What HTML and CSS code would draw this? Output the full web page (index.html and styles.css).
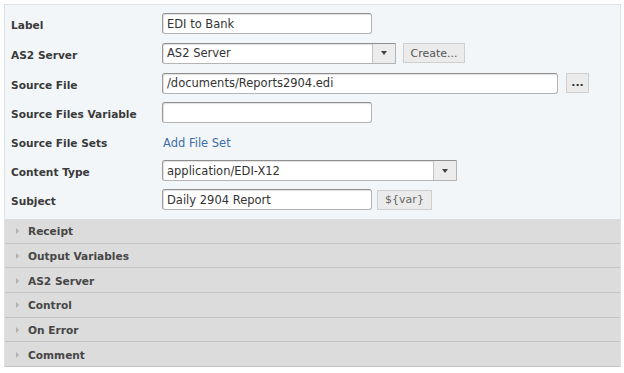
FILE: index.html
```html
<!DOCTYPE html>
<html>
<head>
<meta charset="utf-8">
<link rel="stylesheet" href="styles.css">
</head>
<body>
<div class="panel">
  <div class="form">
    <div class="row">
      <div class="label">Label</div>
      <div class="input w209">EDI to Bank</div>
    </div>
    <div class="row tall">
      <div class="label">AS2 Server</div>
      <div class="select w233"><div class="sel-text">AS2 Server</div><div class="sel-btn"><span class="tri"></span></div></div>
      <div class="btn create">Create...</div>
    </div>
    <div class="row tall">
      <div class="label">Source File</div>
      <div class="input w395">/documents/Reports2904.edi</div>
      <div class="btn dots">...</div>
    </div>
    <div class="row">
      <div class="label">Source Files Variable</div>
      <div class="input w209"></div>
    </div>
    <div class="row">
      <div class="label">Source File Sets</div>
      <div class="link">Add File Set</div>
    </div>
    <div class="row">
      <div class="label">Content Type</div>
      <div class="select w294"><div class="sel-text">application/EDI-X12</div><div class="sel-btn"><span class="tri"></span></div></div>
    </div>
    <div class="row">
      <div class="label">Subject</div>
      <div class="input w209">Daily 2904 Report</div>
      <div class="btn var">${var}</div>
    </div>
  </div>
  <div class="section"><span class="arrow"></span>Receipt</div>
  <div class="section"><span class="arrow"></span>Output Variables</div>
  <div class="section"><span class="arrow"></span>AS2 Server</div>
  <div class="section"><span class="arrow"></span>Control</div>
  <div class="section"><span class="arrow"></span>On Error</div>
  <div class="section"><span class="arrow"></span>Comment</div>
</div>
</body>
</html>
```
FILE: styles.css
```css
html, body {
  margin: 0;
  padding: 0;
  background: #ffffff;
}
body {
  padding: 4px 4px 0 4px;
  font-family: "DejaVu Sans", Verdana, sans-serif;
  font-size: 11px;
  color: #333;
}
.panel {
  width: 615px;
  border: 1px solid #dde2e6;
  border-bottom: none;
  background: #f3f6f9;
}
.form {
  padding: 4px 0 5px 6px;
}
.row {
  display: flex;
  align-items: center;
  height: 29px;
}
.row.tall {
  height: 30px;
}
.label {
  width: 151px;
  flex: none;
  font-weight: bold;
  color: #3a3a3a;
  font-size: 10.6px;
  padding-top: 3px;
}
.input, .select {
  box-sizing: border-box;
  height: 21px;
  background: #fff;
  border: 1px solid #b4b4b4;
  border-top-color: #8e8e8e;
  border-left-color: #9a9a9a;
  border-radius: 3px;
  box-shadow: inset 1px 1px 1px rgba(0,0,0,0.12);
  padding: 0 4px;
  display: flex;
  align-items: center;
  font-size: 11.5px;
  color: #333;
}
.w209 { width: 210px; }
.w395 { width: 396px; }
.w233 { width: 234px; }
.w294 { width: 295px; }
.select {
  padding: 0;
  overflow: hidden;
  border-radius: 3px 0 0 3px;
}
.sel-text {
  flex: 1;
  padding: 0 4px;
}
.sel-btn {
  width: 22px;
  height: 100%;
  background: #ececec;
  border-left: 1px solid #c4c4c4;
  display: flex;
  align-items: center;
  justify-content: center;
}
.tri {
  width: 0;
  height: 0;
  border-left: 3.5px solid transparent;
  border-right: 3.5px solid transparent;
  border-top: 4px solid #444;
}
.btn {
  box-sizing: border-box;
  height: 20px;
  background: #ebebeb;
  border: 1px solid #cfcfcf;
  color: #555;
  display: flex;
  align-items: center;
  justify-content: center;
  font-size: 11px;
}
.create {
  width: 62px;
  margin-left: 7px;
}
.dots {
  width: 23px;
  margin-left: 8px;
  font-weight: bold;
  color: #333;
  align-items: flex-end;
  padding-bottom: 3px;
}
.var {
  width: 55px;
  margin-left: 5px;
  color: #666;
}
.link {
  color: #3d6fa6;
  font-size: 11.5px;
  padding-left: 1px;
  padding-top: 2px;
}
.section {
  box-sizing: border-box;
  height: 24.7px;
  background: #dcdcdc;
  border-bottom: 1px solid #c3c3c3;
  display: flex;
  align-items: center;
  font-weight: bold;
  color: #464646;
  font-size: 10.6px;
  padding-top: 1px;
}
.arrow {
  width: 0;
  height: 0;
  border-top: 3px solid transparent;
  border-bottom: 3px solid transparent;
  border-left: 3px solid #b0b0b0;
  margin-left: 11px;
  margin-right: 9px;
}
```
